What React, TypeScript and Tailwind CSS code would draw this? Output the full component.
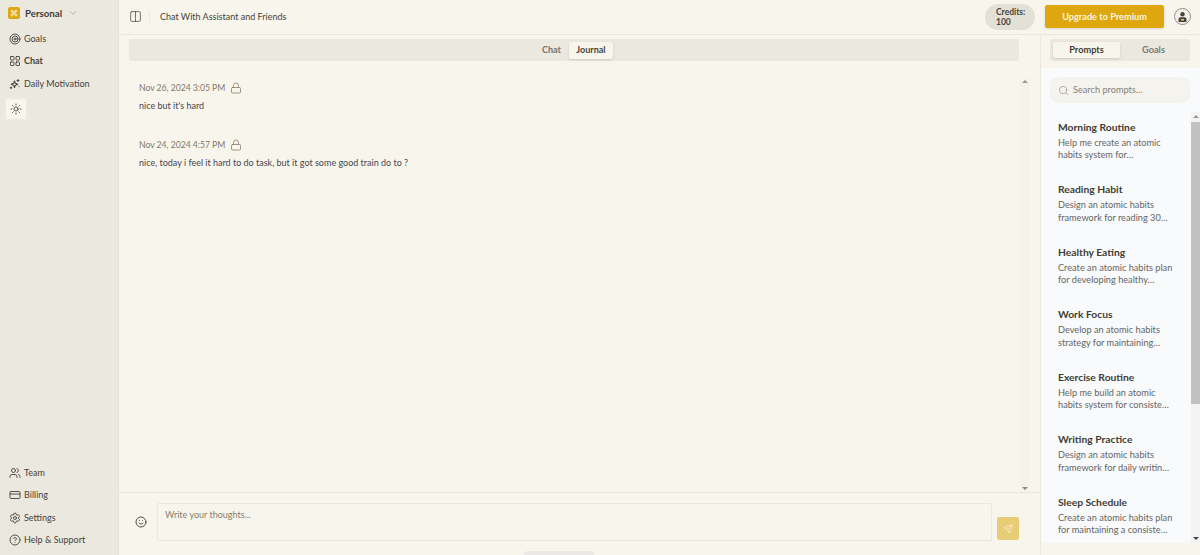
import {
  ChevronDown,
  Columns2,
  Command,
  CircleHelp,
  CreditCard,
  LayoutGrid,
  Lock,
  Search,
  Send,
  Settings,
  Smile,
  Sun,
  Users,
  Target,
} from "lucide-react";

const prompts = [
  { title: "Morning Routine", text: ["Help me create an atomic", "habits system for…"] },
  { title: "Reading Habit", text: ["Design an atomic habits", "framework for reading 30…"] },
  { title: "Healthy Eating", text: ["Create an atomic habits plan", "for developing healthy…"] },
  { title: "Work Focus", text: ["Develop an atomic habits", "strategy for maintaining…"] },
  { title: "Exercise Routine", text: ["Help me build an atomic", "habits system for consiste…"] },
  { title: "Writing Practice", text: ["Design an atomic habits", "framework for daily writin…"] },
  { title: "Sleep Schedule", text: ["Create an atomic habits plan", "for maintaining a consiste…"] },
];

const entries = [
  { date: "Nov 26, 2024 3:05 PM", text: "nice but it's hard" },
  { date: "Nov 24, 2024 4:57 PM", text: "nice, today i feel it hard to do task, but it got some good train do to ?" },
];

const MotivationIcon = ({ size }: { size: number }) => (
  <svg width={size} height={size} viewBox="0 0 24 24" fill="none" stroke="currentColor" strokeWidth="2.2" strokeLinecap="round" strokeLinejoin="round" className="shrink-0">
    <path d="M11 6l1.8 4.7L17.5 12.5l-4.7 1.8L11 19l-1.8-4.7L4.5 12.5l4.7-1.8z" />
    <path d="M18 3v4M16 5h4M4 18v3M2.5 19.5h3M20 17h.01" />
  </svg>
);

const SideItem = ({ icon: Icon, label, bold }: { icon: any; label: string; bold?: boolean }) => (
  <div className={`h-[22.5px] flex items-center gap-[3px] pl-[9px] text-[#45433a] ${bold ? "font-bold" : ""}`}>
    <Icon size={12} strokeWidth={1.8} className="shrink-0" />
    <span>{label}</span>
  </div>
);

const Arrow = ({ up, dark }: { up?: boolean; dark?: boolean }) => (
  <div
    className={`w-0 h-0 border-l-[3px] border-r-[3px] border-l-transparent border-r-transparent ${
      up ? "border-b-[3px]" : "border-t-[3px]"
    } ${up ? (dark ? "border-b-[#555]" : "border-b-[#9a9a9a]") : dark ? "border-t-[#444]" : "border-t-[#8a8a8a]"}`}
  />
);

export default function App() {
  return (
    <div className="relative w-[1200px] h-[555px] overflow-hidden flex bg-[#f8f5ed] text-[9px] leading-[14px] text-[#45443a] font-['Lato',sans-serif]">
      <aside className="w-[119px] shrink-0 bg-[#ebe8e0] border-r border-[#e4e1d7] flex flex-col">
        <div className="h-[27.5px] flex items-center pl-[8px] pb-[1px]">
          <div className="w-[12px] h-[12px] rounded-[2px] bg-[#dea70f] flex items-center justify-center">
            <Command size={8} color="#fff" strokeWidth={2} />
          </div>
          <span className="ml-[5px] text-[9.7px] font-bold text-[#3f3d34]">Personal</span>
          <ChevronDown size={10} strokeWidth={1.5} className="ml-[6px] text-[#8d8a7e]" />
        </div>
        <div className="flex flex-col">
          <SideItem icon={Target} label="Goals" />
          <SideItem icon={LayoutGrid} label="Chat" bold />
          <SideItem icon={MotivationIcon} label="Daily Motivation" />
        </div>
        <div className="mt-[3px] ml-[5px] w-[22px] h-[22px] rounded-[2px] bg-[#f8f5ed] border border-[#efece3] flex items-center justify-center">
          <Sun size={12} strokeWidth={1.8} />
        </div>
        <div className="mt-auto mb-[3.5px] flex flex-col">
          <SideItem icon={Users} label="Team" />
          <SideItem icon={CreditCard} label="Billing" />
          <SideItem icon={Settings} label="Settings" />
          <SideItem icon={CircleHelp} label="Help & Support" />
        </div>
      </aside>

      <div className="flex-1 min-w-0 flex flex-col">
        <header className="h-[35px] shrink-0 flex items-center border-b border-[#ece8db] pb-[1px] pl-[10px] pr-[9px]">
          <Columns2 size={13} strokeWidth={1.4} className="text-[#4d4a3f]" />
          <div className="w-px h-[11px] bg-[#ebe8de] ml-[7px] mr-[10px]" />
          <span className="text-[#45433a]">Chat With Assistant and Friends</span>
          <div className="ml-auto w-[50px] h-[26px] rounded-full bg-[#e3e0d6] pl-[11px] text-[8.5px] leading-[10px] font-bold text-[#45443a] flex flex-col justify-center">
            <span>Credits:</span>
            <span>100</span>
          </div>
          <div className="ml-[10px] w-[119px] h-[23px] rounded-[2px] bg-[#dea70f] text-[9.2px] text-[#fbf3dc] font-bold flex items-center justify-center shadow-sm">
            Upgrade to Premium
          </div>
          <div className="ml-[10px] w-[17px] h-[17px] rounded-full border border-[#8f8f8f] bg-[#f4f2ea] flex items-center justify-center">
            <svg width="11" height="12" viewBox="0 0 11 12">
              <circle cx="5.5" cy="3.2" r="2.2" fill="#4b4436" />
              <path d="M1.5 11 V8 Q1.5 6.2 3.5 6.2 H7.5 Q9.5 6.2 9.5 8 V11 Z" fill="#4b4436" />
              <rect x="4" y="8" width="3" height="1.5" fill="#dcc78c" />
            </svg>
          </div>
        </header>

        <div className="flex-1 min-h-0 flex">
          <main className="flex-1 min-w-0 flex flex-col">
            <div className="flex-1 min-h-0 flex flex-col pl-[10px] pr-[11px] pt-[4px]">
              <div className="mr-[10px] h-[22px] shrink-0 rounded-[2px] bg-[#ebe8e0] flex items-center justify-center gap-[1px]">
                <div className="px-[7px] h-[17px] flex items-center text-[#77736a] font-bold">Chat</div>
                <div className="px-[7.5px] h-[17px] flex items-center rounded-[2px] bg-[#f8f5ed] shadow-sm font-bold text-[#45443a]">
                  Journal
                </div>
              </div>
              <div className="flex-1 min-h-0 flex mt-[17px]">
                <div className="flex-1 min-w-0 pl-[10px] pt-[2px] flex flex-col gap-[24px]">
                  {entries.map((entry) => (
                    <div key={entry.date}>
                      <div className="flex items-center h-[16px] gap-[5px] text-[#7f7a67]">
                        <span className="text-[8.7px] tracking-[-0.05px]">{entry.date}</span>
                        <Lock size={12} strokeWidth={1.5} />
                      </div>
                      <p className="mt-[3px] text-[#45464d]">{entry.text}</p>
                    </div>
                  ))}
                </div>
                <div className="w-[9px] shrink-0 bg-[#f4f2ea] flex flex-col items-center justify-between py-[2px]">
                  <Arrow up />
                  <Arrow />
                </div>
              </div>
            </div>
            <div className="h-[63px] shrink-0 border-t border-[#ebe8da] flex pl-[16px] pr-[21px] pt-[10px]">
              <Smile size={12} strokeWidth={1.8} className="mt-[13px] text-[#3f3d34] shrink-0" />
              <div className="ml-[10px] flex-1 h-[38px] rounded-[2px] border border-[#ebe8da] px-[7px] pt-[4px] text-[#85806d]">
                Write your thoughts...
              </div>
              <div className="ml-[5px] mt-[14px] w-[22px] h-[23px] rounded-[2px] bg-[#e8cd76] flex items-center justify-center">
                <Send size={10} color="#fbf6e2" strokeWidth={1.5} />
              </div>
            </div>
          </main>

          <section className="w-[160px] shrink-0 border-l border-[#ece8db] flex flex-col">
            <div className="h-[33px] shrink-0 pt-[4px] pl-[9px] pr-[10px]">
              <div className="h-[22px] rounded-[2px] bg-[#ebe8e0] flex items-center p-[3px]">
                <div className="flex-1 h-full rounded-[2px] bg-[#f8f5ed] shadow-sm text-[9.2px] font-bold text-[#3f3d34] flex items-center justify-center">
                  Prompts
                </div>
                <div className="flex-1 h-full text-[9.2px] text-[#7d7a6e] font-bold flex items-center justify-center">Goals</div>
              </div>
            </div>
            <div className="h-[475px] shrink-0 bg-[#f9fafb] flex flex-col">
              <div className="h-[44px] shrink-0 pl-[9px] pr-[10px] pt-[9px]">
                <div className="h-[26px] rounded-[8px] bg-[#f4f3ee] flex items-center pl-[8px] gap-[4px] text-[9.2px] text-[#85837a]">
                  <Search size={11} strokeWidth={1.3} className="shrink-0" />
                  <span>Search prompts...</span>
                </div>
              </div>
              <div className="flex-1 min-h-0 flex">
                <div className="flex-1 min-w-0 overflow-hidden pl-[17px] pt-[7.5px] flex flex-col gap-[20.5px]">
                  {prompts.map((prompt) => (
                    <div key={prompt.title}>
                      <div className="h-[15px] text-[10.3px] font-bold text-[#3f3d34]">{prompt.title}</div>
                      <div className="mt-[2px] text-[9.2px] leading-[12.5px] text-[#656565] whitespace-nowrap">
                        {prompt.text.map((line) => (
                          <div key={line}>{line}</div>
                        ))}
                      </div>
                    </div>
                  ))}
                </div>
                <div className="w-[9px] shrink-0 bg-[#f3f3f3] flex flex-col items-center py-[3px]">
                  <Arrow up />
                  <div className="w-full h-[282px] mt-[4px] bg-[#c1c1c1]" />
                  <div className="mt-auto">
                    <Arrow dark />
                  </div>
                </div>
              </div>
            </div>
          </section>
        </div>
      </div>

      <div className="absolute left-[524px] bottom-0 w-[70px] h-[4px] rounded-t-full bg-[#ebe9e6]" />
    </div>
  );
}
